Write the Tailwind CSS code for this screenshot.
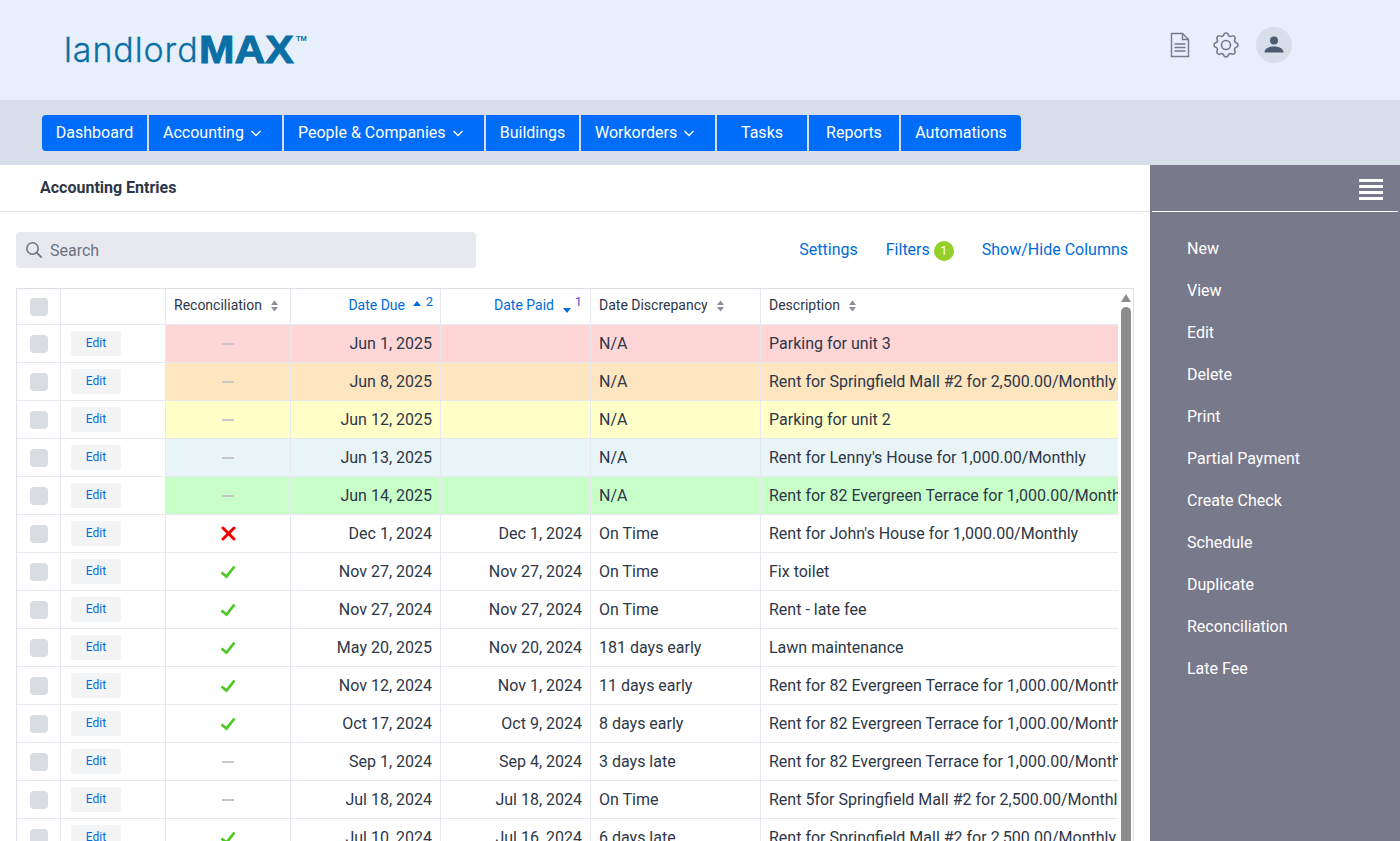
<!DOCTYPE html>
<html lang="en">
<head>
    <meta charset="UTF-8">
    <meta name="viewport" content="width=device-width, initial-scale=1">
    <title>LandlordMAX</title>
    <script src="https://cdn.jsdelivr.net/npm/@tailwindcss/browser@4"></script>
</head>
<body class="bg-white h-[841px] overflow-hidden font-['Roboto',sans-serif] text-[#2d3748]">
    <!-- Header -->
    <header class="h-[100px] bg-[#e8effc] flex items-center justify-between pl-[66px] pr-[108px]">
        <a class="flex items-start text-[#0b6fa4]" href="#">
            <span class="font-['Inter',sans-serif] font-light text-[34px] leading-[40px] w-[135px] -ml-[2px] tracking-[0.9px] [-webkit-text-stroke:0.3px_#0b6fa4]">landlord</span>
            <span class="font-['Liberation_Sans',sans-serif] font-bold text-[38px] leading-[40px] w-[96px] origin-left scale-x-[1.12] [-webkit-text-stroke:1px_#0b6fa4]">MAX</span>
            <span class="font-['Liberation_Sans',sans-serif] font-bold text-[7.5px] leading-[8px] mt-[5px] ml-[1px]">TM</span>
        </a>
        <div class="flex items-center mb-[10px]">
            <svg class="w-[20px] h-[26px] mr-[20px]" viewBox="0 0 20 26" fill="none" stroke="#78788c" stroke-width="1.4">
                <path d="M1.5 1.5h11l6 6v17h-17z"/>
                <path d="M12.5 1.5v6h6"/>
                <path d="M4.5 12h11M4.5 15.5h11M4.5 19h11" stroke-width="1.6"/>
            </svg>
            <svg class="w-[32px] h-[32px] mr-[14px]" viewBox="0 0 24 24" fill="none" stroke="#78788c" stroke-width="1.2" stroke-linecap="round" stroke-linejoin="round">
                <path d="M10.325 4.317c.426-1.756 2.924-1.756 3.35 0a1.724 1.724 0 0 0 2.573 1.066c1.543-.94 3.31.826 2.37 2.37a1.724 1.724 0 0 0 1.065 2.572c1.756.426 1.756 2.924 0 3.35a1.724 1.724 0 0 0-1.066 2.573c.94 1.543-.826 3.31-2.37 2.37a1.724 1.724 0 0 0-2.572 1.065c-.426 1.756-2.924 1.756-3.35 0a1.724 1.724 0 0 0-2.573-1.066c-1.543.94-3.31-.826-2.37-2.37a1.724 1.724 0 0 0-1.065-2.572c-1.756-.426-1.756-2.924 0-3.35a1.724 1.724 0 0 0 1.066-2.573c-.94-1.543.826-3.31 2.37-2.37c.996.608 2.296.07 2.572-1.065z"/>
                <circle cx="12" cy="12" r="3.4"/>
            </svg>
            <div class="w-[36px] h-[36px] rounded-full bg-[#d7dde9] flex items-center justify-center">
                <svg class="w-[20px] h-[20px]" viewBox="0 0 20 20" fill="#4a5b72">
                    <circle cx="10" cy="5.5" r="4"/>
                    <path d="M0.5 17.5c0-4 4.5-6 9.5-6s9.5 2 9.5 6z"/>
                </svg>
            </div>
        </div>
    </header>

    <!-- Menu -->
    <nav class="h-[65px] bg-[#d7dde9] flex items-center pl-[42px] gap-[2px] text-white text-[16px]">
        <a href="#" class="h-[36px] w-[105px] bg-[#006cfa] rounded-l-[4px] flex items-center justify-center">Dashboard</a>
        <a href="#" class="h-[36px] w-[133px] bg-[#006cfa] flex items-center pl-[14px] gap-[5px]">Accounting
            <svg class="w-[14px] h-[14px]" viewBox="0 0 14 14" fill="none" stroke="white" stroke-width="1.3"><path d="M2.5 5l4.5 4.5L11.5 5"/></svg></a>
        <a href="#" class="h-[36px] w-[200px] bg-[#006cfa] flex items-center pl-[14px] gap-[5px]">People &amp; Companies
            <svg class="w-[14px] h-[14px]" viewBox="0 0 14 14" fill="none" stroke="white" stroke-width="1.3"><path d="M2.5 5l4.5 4.5L11.5 5"/></svg></a>
        <a href="#" class="h-[36px] w-[93px] bg-[#006cfa] flex items-center justify-center">Buildings</a>
        <a href="#" class="h-[36px] w-[134px] bg-[#006cfa] flex items-center pl-[14px] gap-[5px]">Workorders
            <svg class="w-[14px] h-[14px]" viewBox="0 0 14 14" fill="none" stroke="white" stroke-width="1.3"><path d="M2.5 5l4.5 4.5L11.5 5"/></svg></a>
        <a href="#" class="h-[36px] w-[90px] bg-[#006cfa] flex items-center justify-center">Tasks</a>
        <a href="#" class="h-[36px] w-[90px] bg-[#006cfa] flex items-center justify-center">Reports</a>
        <a href="#" class="h-[36px] w-[120px] bg-[#006cfa] rounded-r-[4px] flex items-center justify-center">Automations</a>
    </nav>

    <div class="flex h-[676px]">
        <!-- Main -->
        <main class="w-[1150px] overflow-hidden">
            <div class="h-[47px] border-b border-[#e2e4e8] pl-[40px] flex items-center">
                <h1 class="text-[16px] font-bold">Accounting Entries</h1>
            </div>

            <div class="flex items-center justify-between pl-[16px] pr-[22px] mt-[20px] h-[36px]">
                <div class="w-[460px] h-[36px] bg-[#e7e9ef] rounded-[4px] flex items-center pl-[9px] gap-[7px] text-[16px] text-[#6b7280]">
                    <svg class="w-[18px] h-[18px]" viewBox="0 0 18 18" fill="none" stroke="#6b7280" stroke-width="1.5"><circle cx="7.5" cy="7.5" r="5.7"/><path d="M11.7 11.7l5 5" stroke-width="1.8"/></svg>
                    <span class="mt-[2px]">Search</span>
                </div>
                <div class="flex items-center text-[16px] text-[#006cdc] mb-[1px]">
                    <a href="#" class="mr-[28px]">Settings</a>
                    <a href="#">Filters</a>
                    <span class="ml-[4px] mr-[28px] w-[20px] h-[20px] rounded-full bg-[#94cf2c] text-white text-[12px] flex items-center justify-center mt-[2px]">1</span>
                    <a href="#">Show/Hide Columns</a>
                </div>
            </div>

            <!-- Table -->
            <div class="relative ml-[16px] mt-[20px] w-[1118px] h-[600px] border border-[#dcdfe5] overflow-hidden">
                <div class="w-[1101px] overflow-hidden">
                    <table class="table-fixed border-collapse w-[1102px] -ml-px -mt-px text-[16px]">
                        <colgroup>
                            <col class="w-[44px]"><col class="w-[105px]"><col class="w-[125px]"><col class="w-[150px]"><col class="w-[150px]"><col class="w-[170px]"><col class="w-[358px]">
                        </colgroup>
                        <thead>
                            <tr class="h-[36px] text-[14px]">
                                <th class="border border-[#e8e8f0]"><span class="block mx-auto w-[18px] h-[18px] rounded-[4px] bg-[#d9dde1]"></span></th>
                                <th class="border border-[#e8e8f0]"></th>
                                <th class="border border-[#e8e8f0] font-normal text-left pl-[8px] pb-[2px] whitespace-nowrap">Reconciliation
                                    <svg class="inline w-[9px] h-[12px] ml-[5px] mb-[1px]" viewBox="0 0 9 12" fill="#8a8f9a"><path d="M4.5 0.5l3.5 4.5h-7zM4.5 11.5l3.5-4.5h-7z"/></svg></th>
                                <th class="border border-[#e8e8f0] font-normal text-right pr-[8px] pb-[2px] text-[#006cdc] whitespace-nowrap relative">
                                    <span class="pr-[27px]">Date Due</span>
                                    <svg class="absolute right-[19px] top-[12px] w-[8px] h-[5px]" viewBox="0 0 8 5" fill="#006cdc"><path d="M4 0l4 5h-8z"/></svg>
                                    <span class="absolute right-[7px] top-[6px] text-[13px] leading-[13px]">2</span></th>
                                <th class="border border-[#e8e8f0] font-normal text-right pr-[8px] pb-[2px] text-[#006cdc] whitespace-nowrap relative">
                                    <span class="pr-[28px]">Date Paid</span>
                                    <svg class="absolute right-[19px] top-[19px] w-[8px] h-[5px]" viewBox="0 0 8 5" fill="#006cdc"><path d="M4 5l4-5h-8z"/></svg>
                                    <span class="absolute right-[8px] top-[6px] text-[13px] leading-[13px] text-[#5a55c8]">1</span></th>
                                <th class="border border-[#e8e8f0] font-normal text-left pl-[8px] pb-[2px] whitespace-nowrap">Date Discrepancy
                                    <svg class="inline w-[9px] h-[12px] ml-[5px] mb-[1px]" viewBox="0 0 9 12" fill="#8a8f9a"><path d="M4.5 0.5l3.5 4.5h-7zM4.5 11.5l3.5-4.5h-7z"/></svg></th>
                                <th class="border border-[#e8e8f0] font-normal text-left pl-[8px] pb-[2px] whitespace-nowrap">Description
                                    <svg class="inline w-[9px] h-[12px] ml-[5px] mb-[1px]" viewBox="0 0 9 12" fill="#8a8f9a"><path d="M4.5 0.5l3.5 4.5h-7zM4.5 11.5l3.5-4.5h-7z"/></svg></th>
                            </tr>
                        </thead>
                        <tbody id="rows"></tbody>
                    </table>
                </div>
                <!-- Scrollbar -->
                <div class="absolute right-0 top-0 bottom-0 w-[15px] bg-white">
                    <svg class="absolute left-[3px] top-[5px] w-[10px] h-[8px]" viewBox="0 0 10 8" fill="#8c8c8c"><path d="M5 0l5 8h-10z"/></svg>
                    <div class="absolute left-[3px] top-[18px] w-[10px] h-[600px] rounded-t-[5px] bg-[#8c8c8c]"></div>
                </div>
            </div>
        </main>

        <!-- Sidebar -->
        <aside class="w-[250px] bg-[#79798c] text-white text-[16px]">
            <div class="h-[47px] mx-[2px] border-b border-white flex items-center justify-end pr-[15px]">
                <div class="w-[24px] flex flex-col gap-[3.3px] mt-[3px]">
                    <span class="h-[3px] bg-white"></span>
                    <span class="h-[3px] bg-white"></span>
                    <span class="h-[3px] bg-white"></span>
                    <span class="h-[3px] bg-white"></span>
                </div>
            </div>
            <ul class="pl-[37px] pt-[16px]">
                <li class="h-[42px] flex items-center">New</li>
                <li class="h-[42px] flex items-center">View</li>
                <li class="h-[42px] flex items-center">Edit</li>
                <li class="h-[42px] flex items-center">Delete</li>
                <li class="h-[42px] flex items-center">Print</li>
                <li class="h-[42px] flex items-center">Partial Payment</li>
                <li class="h-[42px] flex items-center">Create Check</li>
                <li class="h-[42px] flex items-center">Schedule</li>
                <li class="h-[42px] flex items-center">Duplicate</li>
                <li class="h-[42px] flex items-center">Reconciliation</li>
                <li class="h-[42px] flex items-center">Late Fee</li>
            </ul>
        </aside>
    </div>

    <script>
        const dash = '<span class="block mx-auto w-[12px] h-[2px] bg-[#c8c8c8]"></span>';
        const cross = '<svg class="mx-auto w-[15px] h-[15px]" viewBox="0 0 15 15" stroke="#f00000" stroke-width="3" stroke-linecap="round"><path d="M2 2l11 11M13 2l-11 11"/></svg>';
        const check = '<svg class="mx-auto w-[16px] h-[14px]" viewBox="0 0 16 14" fill="none" stroke="#4fc726" stroke-width="2.8"><path d="M1.5 7.5l5 4L14.5 1.5"/></svg>';

        const entries = [
            { bg: 'bg-[#ffd6d6]', rec: dash, due: 'Jun 1, 2025', paid: '', disc: 'N/A', desc: 'Parking for unit 3' },
            { bg: 'bg-[#fde5c0]', rec: dash, due: 'Jun 8, 2025', paid: '', disc: 'N/A', desc: 'Rent for Springfield Mall #2 for 2,500.00/Monthly' },
            { bg: 'bg-[#ffffc8]', rec: dash, due: 'Jun 12, 2025', paid: '', disc: 'N/A', desc: 'Parking for unit 2' },
            { bg: 'bg-[#e9f4f6]', rec: dash, due: 'Jun 13, 2025', paid: '', disc: 'N/A', desc: "Rent for Lenny's House for 1,000.00/Monthly" },
            { bg: 'bg-[#c8ffc8]', rec: dash, due: 'Jun 14, 2025', paid: '', disc: 'N/A', desc: 'Rent for 82 Evergreen Terrace for 1,000.00/Monthly' },
            { bg: '', rec: cross, due: 'Dec 1, 2024', paid: 'Dec 1, 2024', disc: 'On Time', desc: "Rent for John's House for 1,000.00/Monthly" },
            { bg: '', rec: check, due: 'Nov 27, 2024', paid: 'Nov 27, 2024', disc: 'On Time', desc: 'Fix toilet' },
            { bg: '', rec: check, due: 'Nov 27, 2024', paid: 'Nov 27, 2024', disc: 'On Time', desc: 'Rent - late fee' },
            { bg: '', rec: check, due: 'May 20, 2025', paid: 'Nov 20, 2024', disc: '181 days early', desc: 'Lawn maintenance' },
            { bg: '', rec: check, due: 'Nov 12, 2024', paid: 'Nov 1, 2024', disc: '11 days early', desc: 'Rent for 82 Evergreen Terrace for 1,000.00/Monthly' },
            { bg: '', rec: check, due: 'Oct 17, 2024', paid: 'Oct 9, 2024', disc: '8 days early', desc: 'Rent for 82 Evergreen Terrace for 1,000.00/Monthly' },
            { bg: '', rec: dash, due: 'Sep 1, 2024', paid: 'Sep 4, 2024', disc: '3 days late', desc: 'Rent for 82 Evergreen Terrace for 1,000.00/Monthly' },
            { bg: '', rec: dash, due: 'Jul 18, 2024', paid: 'Jul 18, 2024', disc: 'On Time', desc: 'Rent 5for Springfield Mall #2 for 2,500.00/Monthly' },
            { bg: '', rec: check, due: 'Jul 10, 2024', paid: 'Jul 16, 2024', disc: '6 days late', desc: 'Rent for Springfield Mall #2 for 2,500.00/Monthly' }
        ];

        // Build the table rows
        document.getElementById('rows').innerHTML = entries.map(e => `
            <tr class="h-[38px]">
                <td class="border border-[#e8e8f0]"><span class="block mx-auto w-[18px] h-[18px] rounded-[4px] bg-[#d9dde1]"></span></td>
                <td class="border border-[#e8e8f0] pl-[10px]"><a href="#" class="flex items-center justify-center w-[50px] h-[25px] pb-[2px] rounded-[3px] bg-[#f3f4f6] text-[12px] text-[#006cdc]">Edit</a></td>
                <td class="border border-[#e8e8f0] ${e.bg}">${e.rec}</td>
                <td class="border border-[#e8e8f0] ${e.bg} text-right pr-[8px]">${e.due}</td>
                <td class="border border-[#e8e8f0] ${e.bg} text-right pr-[8px]">${e.paid}</td>
                <td class="border border-[#e8e8f0] ${e.bg} pl-[8px]">${e.disc}</td>
                <td class="border border-[#e8e8f0] ${e.bg} pl-[8px] whitespace-nowrap overflow-hidden">${e.desc}</td>
            </tr>`).join('');
    </script>
</body>
</html>
